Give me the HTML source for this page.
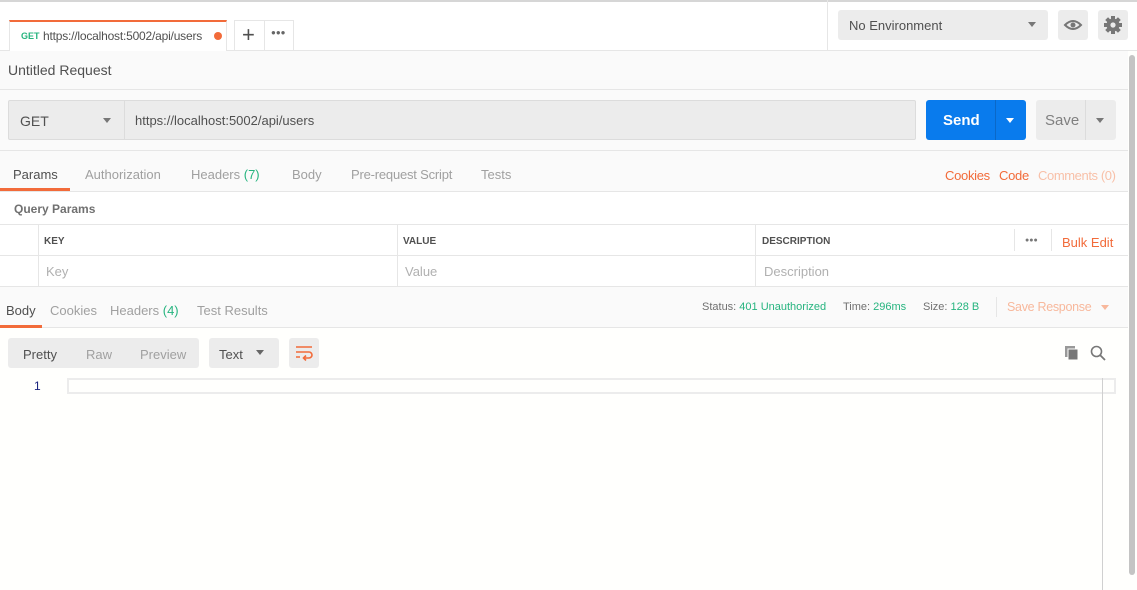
<!DOCTYPE html>
<html><head><meta charset="utf-8"><style>
*{box-sizing:border-box;margin:0;padding:0}
body{width:1137px;height:590px;overflow:hidden;background:#fffffd;font-family:"Liberation Sans",sans-serif;font-size:13px;color:#505050;position:relative}
.a{position:absolute}
.t{position:absolute;white-space:nowrap}
</style></head><body>
<div class="a" style="left:0;top:0;width:1137px;height:51px;background:#fff;border-bottom:1px solid #e6e6e6"></div>
<div class="a" style="left:0;top:0;width:1137px;height:2px;background:#d6d6d6"></div>
<div class="a" style="left:9px;top:20px;width:218px;height:31px;background:#fff;border-top:2px solid #f26b3a;border-left:1px solid #e6e6e6;border-right:1px solid #e6e6e6"></div>
<div class="t" style="left:21px;top:31px;font-size:9px;font-weight:bold;color:#26b47f">GET</div>
<div class="t" style="left:43px;top:29px;font-size:12px;color:#505050;letter-spacing:-0.2px">https://localhost:5002/api/users</div>
<div class="a" style="left:214px;top:32px;width:8px;height:8px;border-radius:50%;background:#f26b3a"></div>
<div class="a" style="left:234px;top:20px;width:60px;height:31px;border:1px solid #e6e6e6;border-bottom:none"></div>
<div class="a" style="left:264px;top:20px;width:1px;height:30px;background:#e6e6e6"></div>
<div class="t" style="left:242px;top:22px;font-size:22px;color:#505050">+</div>
<div class="t" style="left:271px;top:28px;font-size:8px;color:#666;letter-spacing:0px">●●●</div>
<div class="a" style="left:827px;top:0;width:1px;height:50px;background:#e6e6e6"></div>
<div class="a" style="left:838px;top:10px;width:210px;height:30px;background:#ececec;border-radius:3px"></div>
<div class="t" style="left:849px;top:18px;color:#505050">No Environment</div>
<div class="a" style="left:1028px;top:22px;border:4px solid transparent;border-top:5px solid #777"></div>
<div class="a" style="left:1058px;top:10px;width:30px;height:30px;background:#ececec;border-radius:3px"></div>
<svg class="a" style="left:1063px;top:17px" width="20" height="16" viewBox="0 0 20 16"><path d="M2 8 Q10 0 18 8 Q10 16 2 8Z" fill="none" stroke="#777" stroke-width="2"/><circle cx="10" cy="8" r="2.5" fill="#777"/></svg>
<div class="a" style="left:1098px;top:10px;width:30px;height:30px;background:#ececec;border-radius:3px"></div>
<svg class="a" style="left:1103px;top:15px" width="20" height="20" viewBox="0 0 20 20"><g fill="#777"><circle cx="10" cy="10" r="6.5"/><rect x="8" y="1" width="4" height="18"/><rect x="1" y="8" width="18" height="4"/><rect x="8" y="1" width="4" height="18" transform="rotate(45 10 10)"/><rect x="8" y="1" width="4" height="18" transform="rotate(-45 10 10)"/></g><circle cx="10" cy="10" r="2.6" fill="#ececec"/></svg>

<div class="a" style="left:0;top:51px;width:1128px;height:237px;background:#fafafa"></div>
<div class="t" style="left:8px;top:62px;font-size:14px;color:#505050">Untitled Request</div>
<div class="a" style="left:0;top:89px;width:1128px;height:1px;background:#e6e6e6"></div>
<div class="a" style="left:8px;top:100px;width:908px;height:40px;background:#ececec;border:1px solid #dcdcdc;border-radius:2px"></div>
<div class="a" style="left:124px;top:101px;width:1px;height:38px;background:#dcdcdc"></div>
<div class="t" style="left:20px;top:113px;font-size:14px;color:#505050">GET</div>
<div class="a" style="left:103px;top:118px;border:4px solid transparent;border-top:5px solid #777"></div>
<div class="t" style="left:135px;top:113px;color:#505050">https://localhost:5002/api/users</div>
<div class="a" style="left:926px;top:100px;width:100px;height:40px;background:#097bed;border-radius:3px"></div>
<div class="a" style="left:995px;top:100px;width:1px;height:40px;background:#0a68c8"></div>
<div class="t" style="left:943px;top:112px;font-size:15px;font-weight:bold;color:#fff">Send</div>
<div class="a" style="left:1006px;top:118px;border:4px solid transparent;border-top:5px solid #fff"></div>
<div class="a" style="left:1036px;top:100px;width:80px;height:40px;background:#ececec;border-radius:3px"></div>
<div class="a" style="left:1085px;top:100px;width:1px;height:40px;background:#dcdcdc"></div>
<div class="t" style="left:1045px;top:112px;font-size:15px;color:#808080">Save</div>
<div class="a" style="left:1096px;top:118px;border:4px solid transparent;border-top:5px solid #777"></div>
<div class="a" style="left:0;top:150px;width:1128px;height:1px;background:#e6e6e6"></div>
<div class="t" style="left:13px;top:167px;color:#505050">Params</div>
<div class="a" style="left:0;top:188px;width:70px;height:3px;background:#f26b3a"></div>
<div class="t" style="left:85px;top:167px;color:#a0a0a0">Authorization</div>
<div class="t" style="left:191px;top:167px;color:#a0a0a0">Headers <span style="color:#26b47f">(7)</span></div>
<div class="t" style="left:292px;top:167px;color:#a0a0a0">Body</div>
<div class="t" style="left:351px;top:167px;color:#a0a0a0;letter-spacing:-0.2px">Pre-request Script</div>
<div class="t" style="left:481px;top:167px;color:#a0a0a0">Tests</div>
<div class="t" style="left:945px;top:168px;color:#f26b3a;letter-spacing:-0.3px">Cookies</div>
<div class="t" style="left:999px;top:168px;color:#f26b3a;letter-spacing:-0.3px">Code</div>
<div class="t" style="left:1038px;top:168px;color:#f8c0a8;letter-spacing:-0.4px">Comments (0)</div>
<div class="a" style="left:0;top:191px;width:1128px;height:1px;background:#e6e6e6"></div>
<div class="a" style="left:0;top:192px;width:1128px;height:96px;background:#fff"></div>
<div class="t" style="left:14px;top:202px;font-size:12px;font-weight:bold;color:#707070">Query Params</div>
<div class="a" style="left:0;top:224px;width:1128px;height:1px;background:#e6e6e6"></div>
<div class="a" style="left:0;top:255px;width:1128px;height:1px;background:#e6e6e6"></div>
<div class="a" style="left:0;top:286px;width:1128px;height:1px;background:#e6e6e6"></div>
<div class="a" style="left:38px;top:224px;width:1px;height:62px;background:#e6e6e6"></div>
<div class="a" style="left:397px;top:224px;width:1px;height:62px;background:#e6e6e6"></div>
<div class="a" style="left:755px;top:224px;width:1px;height:62px;background:#e6e6e6"></div>
<div class="a" style="left:1014px;top:229px;width:1px;height:22px;background:#e6e6e6"></div>
<div class="a" style="left:1051px;top:229px;width:1px;height:22px;background:#e6e6e6"></div>
<div class="t" style="left:44px;top:236px;font-size:10px;font-weight:bold;color:#505050">KEY</div>
<div class="t" style="left:403px;top:236px;font-size:10px;font-weight:bold;color:#505050">VALUE</div>
<div class="t" style="left:762px;top:236px;font-size:10px;font-weight:bold;color:#505050">DESCRIPTION</div>
<div class="t" style="left:1025px;top:237px;font-size:7px;color:#777">●●●</div>
<div class="t" style="left:1062px;top:235px;color:#f26b3a">Bulk Edit</div>
<div class="t" style="left:46px;top:264px;color:#b0b0b0">Key</div>
<div class="t" style="left:405px;top:264px;color:#b0b0b0">Value</div>
<div class="t" style="left:764px;top:264px;color:#b0b0b0">Description</div>

<div class="a" style="left:0;top:287px;width:1128px;height:41px;background:#fafafa;border-bottom:1px solid #e6e6e6"></div>
<div class="t" style="left:6px;top:303px;color:#505050">Body</div>
<div class="a" style="left:0;top:325px;width:42px;height:3px;background:#f26b3a"></div>
<div class="t" style="left:50px;top:303px;color:#a0a0a0">Cookies</div>
<div class="t" style="left:110px;top:303px;color:#a0a0a0">Headers <span style="color:#26b47f">(4)</span></div>
<div class="t" style="left:197px;top:303px;color:#a0a0a0">Test Results</div>
<div class="t" style="left:702px;top:301px;font-size:11px;color:#707070">Status: <span style="color:#26b47f">401 Unauthorized</span></div>
<div class="t" style="left:843px;top:301px;font-size:11px;color:#707070">Time: <span style="color:#26b47f">296ms</span></div>
<div class="t" style="left:923px;top:301px;font-size:11px;color:#707070">Size: <span style="color:#26b47f">128 B</span></div>
<div class="a" style="left:996px;top:297px;width:1px;height:20px;background:#e6e6e6"></div>
<div class="t" style="left:1007px;top:300px;font-size:12.5px;color:#f8b89c;letter-spacing:-0.3px">Save Response</div>
<div class="a" style="left:1101px;top:305px;border:4px solid transparent;border-top:5px solid #f8b89c"></div>

<div class="a" style="left:8px;top:338px;width:191px;height:30px;background:#ececec;border-radius:3px"></div>
<div class="t" style="left:23px;top:347px;color:#505050">Pretty</div>
<div class="t" style="left:86px;top:347px;color:#a0a0a0">Raw</div>
<div class="t" style="left:140px;top:347px;color:#a0a0a0">Preview</div>
<div class="a" style="left:209px;top:338px;width:70px;height:30px;background:#ececec;border-radius:3px"></div>
<div class="t" style="left:219px;top:347px;color:#505050">Text</div>
<div class="a" style="left:256px;top:350px;border:4px solid transparent;border-top:5px solid #666"></div>
<div class="a" style="left:289px;top:338px;width:30px;height:30px;background:#ececec;border-radius:3px"></div>
<svg class="a" style="left:295px;top:345px" width="18" height="16" viewBox="0 0 18 16"><g fill="none" stroke="#f26b3a" stroke-width="1.6"><path d="M1 2h16M1 7h13a3 3 0 0 1 0 6H9M1 12h4"/><path d="M11 10.5L8.5 13L11 15.5"/></g></svg>
<svg class="a" style="left:1064px;top:345px" width="16" height="16" viewBox="0 0 16 16"><rect x="1" y="1" width="10" height="11" fill="#999"/><rect x="4" y="4" width="10" height="11" fill="#777" stroke="#fffffd" stroke-width="1"/></svg>
<svg class="a" style="left:1090px;top:345px" width="16" height="16" viewBox="0 0 16 16"><circle cx="6.5" cy="6.5" r="5" fill="none" stroke="#777" stroke-width="1.6"/><path d="M10 10l5 5" stroke="#777" stroke-width="1.8"/></svg>

<div class="t" style="left:34px;top:379px;font-size:12px;color:#1a237e">1</div>
<div class="a" style="left:67px;top:378px;width:1049px;height:16px;border:2px solid #ececec"></div>
<div class="a" style="left:1102px;top:378px;width:1px;height:212px;background:#d0d0d0"></div>
<div class="a" style="left:1129px;top:55px;width:6px;height:520px;background:#c4c4c4;border-radius:3px"></div>
</body></html>
